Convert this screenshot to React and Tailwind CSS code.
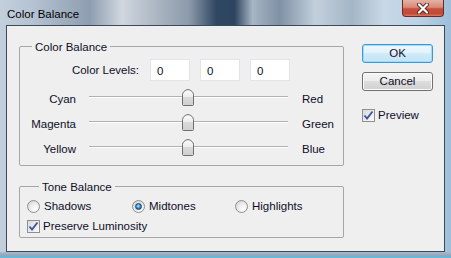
import React from "react";

const GroupBox = ({ title, className = "", children }) => (
	<fieldset className={`w-[325px] rounded-[2px] border border-[#a6a6a6] ${className}`}>
		<legend className="ml-[12px] px-[3px] pt-[1px] leading-[14px]">{title}</legend>
		{children}
	</fieldset>
);

const Thumb = ({ id }) => (
	<svg className="absolute left-[93px] top-0" width="12" height="17" viewBox="0 0 12 17">
		<defs>
			<linearGradient id={id} x1="0" y1="0" x2="0" y2="1">
				<stop offset="0" stopColor="#fbfbfb" />
				<stop offset="0.45" stopColor="#ededed" />
				<stop offset="0.5" stopColor="#d9d9d9" />
				<stop offset="1" stopColor="#cfcfcf" />
			</linearGradient>
		</defs>
		<path
			d="M1.5 16.5 Q0.5 16.5 0.5 15.5 V5.5 C0.5 3.5 3 0.8 6 0.5 C9 0.8 11.5 3.5 11.5 5.5 V15.5 Q11.5 16.5 10.5 16.5 Z"
			fill={`url(#${id})`}
			stroke="#6f6f6f"
		/>
	</svg>
);

const SliderRow = ({ left, right, id }) => (
	<div className="flex h-[25px] items-center">
		<span className="w-[56px] pt-[3px] text-right">{left}</span>
		<div className="relative mb-[2px] ml-[13px] h-[17px] w-[199px]">
			<div className="absolute left-0 right-0 top-[7px] h-[1px] bg-[#b1b1b1]" />
			<div className="absolute left-0 right-0 top-[8px] h-[1px] bg-white" />
			<Thumb id={id} />
		</div>
		<span className="ml-[14px] pt-[3px]">{right}</span>
	</div>
);

const Radio = ({ checked, label, className = "" }) => (
	<div className={`flex items-center ${className}`}>
		<span className="flex h-[13px] w-[13px] items-center justify-center rounded-full border border-[#8e8f8f] bg-[radial-gradient(circle_at_65%_70%,#ffffff,#e8e8e8_55%,#c4c4c4)]">
			{checked && (
				<span className="h-[7px] w-[7px] rounded-full border border-[#1b3d6c] bg-[radial-gradient(circle_at_45%_40%,#b4e6ff,#2d89cf_55%,#0b3b78)]" />
			)}
		</span>
		<span className="ml-[4px] pt-[1px]">{label}</span>
	</div>
);

const Checkbox = ({ label, className = "" }) => (
	<div className={`flex items-center ${className}`}>
		<span className="flex h-[13px] w-[13px] items-center justify-center border border-[#8e8f8f] bg-[linear-gradient(135deg,#d6d9dd,#fafafa)]">
			<svg width="11" height="11" viewBox="0 0 11 11">
				<path d="M1.5 5.5 L4 8.5 L9.5 1.5" fill="none" stroke="#3f509a" strokeWidth="1.8" />
			</svg>
		</span>
		<span className="ml-[3px] pt-[1px]">{label}</span>
	</div>
);

const CloseButton = () => (
	<div className="mr-[7px] flex h-[17px] w-[42px] items-center justify-center rounded-b-[4px] border border-t-0 border-[#6d2a22] bg-[linear-gradient(180deg,#e4b2a5_0%,#d98a78_45%,#c5503c_55%,#c34a36_85%,#d97a62_100%)]">
		<svg width="14" height="11" viewBox="0 0 14 11">
			<path d="M3 1.5 L11 9.5 M11 1.5 L3 9.5" stroke="#5b2a24" strokeWidth="4" strokeLinecap="round" />
			<path d="M3 1.5 L11 9.5 M11 1.5 L3 9.5" stroke="#ffffff" strokeWidth="2.2" strokeLinecap="round" />
		</svg>
	</div>
);

const LevelBox = ({ value }) => (
	<div className="h-[22px] w-[40px] border border-[#e3e4ea] bg-white pl-[6px] pt-[1px] leading-[20px]">{value}</div>
);

export default function App() {
	return (
		<div className="flex h-[258px] w-[451px] flex-col bg-[linear-gradient(90deg,#c3cfdc_0%,#b5c3d2_7%,#8e9eb0_20%,#d0d7df_27%,#aab5c1_35%,#8b99aa_42%,#2f4762_48%,#2d4560_52%,#a7b5c4_56%,#7f91a5_62%,#c3d0dc_70%,#a4b5c6_78%,#c8d8e6_85%,#bcd3e6_92%,#9ebfd9_100%)] font-['Liberation_Sans',Arial,sans-serif] text-[11.5px] text-[#0e0e28]">
			<div className="flex h-[25px] items-start justify-between">
				<span className="ml-[7px] mt-[6px] leading-[16px] text-black">Color Balance</span>
				<CloseButton />
			</div>
			<div className="mx-[6px] flex h-[227px] border border-[#3b4a5a] bg-[#efefef]">
				<div className="pl-[12px] pt-[13px]">
					<GroupBox title="Color Balance" className="pb-[4px]">
						<div className="mt-[5px] flex items-center">
							<span className="w-[119px] pt-[1px] text-right">Color Levels:</span>
							<div className="ml-[11px] flex gap-[10px]">
								<LevelBox value="0" />
								<LevelBox value="0" />
								<LevelBox value="0" />
							</div>
						</div>
						<div className="mt-[5px]">
							<SliderRow left="Cyan" right="Red" id="t1" />
							<SliderRow left="Magenta" right="Green" id="t2" />
							<SliderRow left="Yellow" right="Blue" id="t3" />
						</div>
					</GroupBox>
					<GroupBox title="Tone Balance" className="mt-[13px] pb-[4px] pl-[7px]">
						<div className="mt-[5px] flex h-[14px] items-center">
							<Radio label="Shadows" className="w-[105px]" />
							<Radio label="Midtones" checked className="w-[103px]" />
							<Radio label="Highlights" />
						</div>
						<Checkbox label="Preserve Luminosity" className="mt-[6px] h-[14px]" />
					</GroupBox>
				</div>
				<div className="ml-[18px] pt-[18px]">
					<div className="flex h-[19px] w-[71px] items-center justify-center rounded-[3px] border border-[#3a9ad9] bg-[linear-gradient(180deg,#eef7fc_0%,#e3f2fb_50%,#d0eaf8_50%,#c4e4f6_100%)] pt-[1px] shadow-[inset_0_0_0_1px_#9fdcf8]">
						OK
					</div>
					<div className="mt-[9px] flex h-[19px] w-[71px] items-center justify-center rounded-[3px] border border-[#707070] bg-[linear-gradient(180deg,#f4f4f4_0%,#ececec_50%,#dddddd_50%,#d0d0d0_100%)] pt-[1px] shadow-[inset_0_0_0_1px_#fcfcfc]">
						Cancel
					</div>
					<Checkbox label="Preview" className="mt-[15px]" />
				</div>
			</div>
			<div className="h-[6px] bg-[linear-gradient(180deg,#a9bacb_0%,#8fa5ba_65%,#4cc6ec_100%)]" />
		</div>
	);
}
